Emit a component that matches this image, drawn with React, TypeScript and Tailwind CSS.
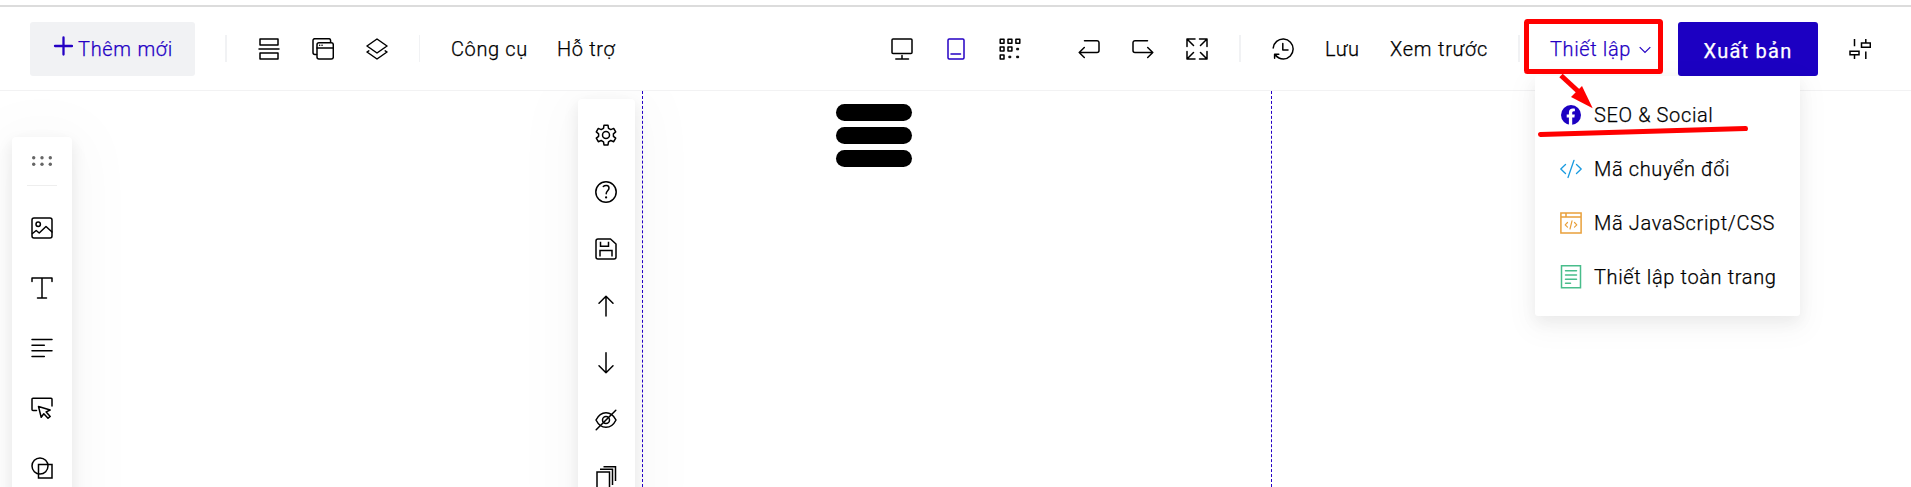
import type { ReactNode } from 'react'

function Icon({ children, className = '' }: { children: ReactNode; className?: string }) {
  return (
    <svg
      viewBox="0 0 22 22"
      className={`h-[22px] w-[22px] shrink-0 ${className}`}
      fill="none"
      stroke="currentColor"
      strokeWidth="1.5"
      strokeLinecap="round"
      strokeLinejoin="round"
    >
      {children}
    </svg>
  )
}

function Divider({ className = 'w-[2px]' }: { className?: string }) {
  return <div className={`h-[27px] shrink-0 bg-[#f1f2f4] ${className}`} />
}

const Sections = () => (
  <Icon>
    <rect x="2" y="1" width="18" height="6" />
    <path d="M1 11h20" />
    <rect x="2" y="15" width="18" height="6" />
  </Icon>
)
const Windows = () => (
  <Icon>
    <path d="M4.500 16.500H3a2 2 0 0 1-2-2V2.500a1.800 1.800 0 0 1 1.800-1.800h14a1.800 1.800 0 0 1 1.800 1.800V4" />
    <rect x="5" y="4.700" width="16.300" height="16.300" rx="2" />
    <path d="M5 10h16.300" />
    <path d="M7.600 7.300h.1M10 7.300h.1" />
  </Icon>
)
const Layers = () => (
  <Icon>
    <path d="M11 1 21 8l-10 7L1 8z" />
    <path d="M2.800 12.800 1 14l10 7 10-7-1.800-1.200" />
  </Icon>
)
const Desktop = () => (
  <Icon>
    <rect x="1" y="1" width="20" height="14.500" rx="1" />
    <path d="M11 17.500v3.200M4.800 21h12.700" />
  </Icon>
)
const Tablet = () => (
  <Icon className="text-[#2400c4]">
    <rect x="3" y="1" width="16" height="20" rx="1.200" />
    <path d="M6 16h9.500" />
  </Icon>
)
const Qr = () => (
  <Icon>
    <path d="M1.200 1.200h3.800v4H1.200zM9 1.200h3.900v4H9zM16.900 1.200h3.900v4h-3.900zM1.200 9h3.800v4H1.200zM9 9h3.900v4H9zM1.200 17h3.800v4H1.200z" />
    <path d="M18 10.300h1.600v1.500H18zM10.200 18.200h1.600v1.500h-1.600zM18 18.200h1.600v1.500H18z" strokeWidth="1" fill="currentColor" />
  </Icon>
)
const Undo = () => (
  <Icon>
    <path d="M6.500 2.700H19a2 2 0 0 1 2 2v7.800a2 2 0 0 1-2 2H1.200M6.300 9.500l-5.100 5 5.100 5" />
  </Icon>
)
const Redo = () => (
  <Icon>
    <path d="M15.500 2.700H3a2 2 0 0 0-2 2v7.800a2 2 0 0 0 2 2h17.800M15.700 9.500l5.100 5-5.100 5" />
  </Icon>
)
const Expand = () => (
  <Icon>
    <path d="M1 8.500V1h8M1 1l6.500 6.500M13.500 1H21v7.500M21 1l-6.500 6.500M1 13.500V21h8M1 21l6.500-6.500M21 13.500V21h-7.500M21 21l-6.500-6.500" />
  </Icon>
)
const History = () => (
  <Icon>
    <path d="M1.200 10A10 10 0 1 1 11.500 21c-3.500 0-6-1.300-8-4M10.800 5.500V12H16M2.600 20.300V16.300h4.200" />
  </Icon>
)
const Sliders = () => (
  <Icon>
    <path d="M5.500 1v7.300M1 13.200h9v3.600H1zM5.500 17v4M16.800 1v3.800M12.500 5h8.800v4.300h-8.800zM16.800 13.400V21" strokeLinecap="butt" strokeLinejoin="miter" />
  </Icon>
)
const Picture = () => (
  <Icon>
    <rect x="1" y="1" width="20" height="20" rx="2" />
    <circle cx="7.200" cy="7.300" r="2.200" />
    <path d="m1.500 16.500 3.700-3 3 2.500L15 9.500l6 5.500" />
  </Icon>
)
const TextIcon = () => (
  <Icon>
    <path d="M1 4.500V1h20v3.500M11 1v20M6.500 21h9" />
  </Icon>
)
const Paragraph = () => (
  <Icon>
    <path d="M1 2.500h20M1 8.200h12.300M1 13.800h20M1 19.500h12.300" />
  </Icon>
)
const Click = () => (
  <Icon>
    <path d="M5.500 13.500H2a1 1 0 0 1-1-1V2.200a1 1 0 0 1 1-1h18a1 1 0 0 1 1 1V9" />
    <path d="m7.500 9.500 2.700 10.800 2.600-3.500 4.200 4.500 2.200-1.900-4-4.500 4-1.900z" />
  </Icon>
)
const Shapes = () => (
  <Icon>
    <circle cx="9" cy="9" r="8" />
    <path d="M7.500 7.500H21v13.500H7.500z" strokeLinejoin="miter" />
  </Icon>
)
const Gear = () => (
  <Icon>
    <circle cx="11" cy="11" r="3.500" />
    <path d="M9 1.200h4l.5 3.100 2.300 1.300 2.900-1.200 2 3.500-2.300 1.900v2.500l2.300 1.900-2 3.500-2.900-1.200-2.300 1.300-.5 3.100H9l-.5-3.100-2.300-1.300-2.900 1.200-2-3.500 2.300-1.900V9.800L1.300 7.900l2-3.500 2.900 1.200 2.300-1.300z" />
  </Icon>
)
const Help = () => (
  <Icon>
    <circle cx="11" cy="11" r="10.200" />
    <path d="M8.300 5.500C9.700 4 14 3.700 14 7c0 2.800-2.800 2.800-2.800 5.800" />
    <path d="M11.100 16.300v.2" strokeWidth="2.200" />
  </Icon>
)
const Save = () => (
  <Icon>
    <path d="M3 1h12.500L21 6v13a2 2 0 0 1-2 2H3a2 2 0 0 1-2-2V3a2 2 0 0 1 2-2z" />
    <path d="M5.500 3.700v4.500h8V3.700M5 18.500v-6h12v6" strokeLinecap="butt" strokeLinejoin="miter" />
  </Icon>
)
const Up = () => (
  <Icon>
    <path d="M11 1.200V21M4 8.200l7-7 7 7" />
  </Icon>
)
const Down = () => (
  <Icon>
    <path d="M11 .8v20M4 13.800l7 7 7-7" />
  </Icon>
)
const Hidden = () => (
  <Icon>
    <path d="M1 11c2.500-5 6-7.300 10-7.300S18.500 6 21 11c-2.500 5-6 7.300-10 7.300S3.500 16 1 11z" />
    <circle cx="11" cy="11" r="3.500" />
    <path d="M20.800 1.200 1.200 20.800" />
  </Icon>
)
const Copies = () => (
  <Icon>
    <path d="M2 6h12.500v16H2zM5 3.300h12.500V19M8.500.7h12V15" strokeLinecap="butt" strokeLinejoin="miter" />
  </Icon>
)

const menu = [
  {
    label: 'SEO & Social',
    icon: (
      <svg viewBox="0 0 22 22" className="h-[22px] w-[22px]">
        <circle cx="11" cy="11" r="10" fill="#1c00c2" />
        <path d="M8.900 21v-7.400H6.700v-3h2.200V8.700c0-2.700 1.600-4.100 4-4.100.9 0 2 .2 2 .2v2.400h-1.100c-1.200 0-1.600.8-1.600 1.600v1.800h2.600l-.4 3h-2.200V21z" fill="#fff" />
      </svg>
    ),
  },
  {
    label: 'Mã chuyển đổi',
    icon: (
      <Icon className="text-[#1a9be0]">
        <path d="M5.500 6.500.8 11l4.700 4.500M16.500 6.500 21.200 11l-4.700 4.500M14 2.300 8 19.500" strokeWidth="1.300" />
      </Icon>
    ),
  },
  {
    label: 'Mã JavaScript/CSS',
    icon: (
      <Icon className="text-[#e9a03b]">
        <path d="M.9.900h20.200v20.200H.9zM1 4.900h20M6 1v4" strokeLinejoin="miter" />
        <path d="m7.500 10.500-2.300 2.300 2.300 2.300M14.500 10.500l2.300 2.300-2.300 2.300M12 8.800 10 17" strokeWidth="1.200" />
      </Icon>
    ),
  },
  {
    label: 'Thiết lập toàn trang',
    icon: (
      <Icon className="overflow-visible text-[#48bd8b]">
        <path d="M1.500-.2h19v21.900h-19z" strokeLinejoin="miter" />
        <path d="M5.500 4.800h11M5.500 9h11M5.500 13.200h11M5.500 17.200h5" />
      </Icon>
    ),
  },
]

const blockTools = [Gear, Help, Save, Up, Down, Hidden, Copies]
const insertTools = [Picture, TextIcon, Paragraph, Click, Shapes]

function Header() {
  return (
    <header className="flex h-[86px] w-full items-center border-t-2 border-b border-t-[#dcdcdc] border-b-[#f2f2f3] bg-white pl-[30px]">
      <button className="mt-px flex h-[54px] w-[165px] shrink-0 items-center rounded-[3px] bg-[#f1f2f4] pl-[23px] text-[#2400c4]">
        <svg viewBox="0 0 20 20" className="-mt-1.5 h-5 w-5 shrink-0" stroke="currentColor" strokeWidth="2.300" strokeLinecap="round">
          <path d="M10.500 1.500v17M2 10h17" />
        </svg>
        <span className="ml-[5px] tracking-[0.700px]">Thêm mới</span>
      </button>
      <Divider className="ml-[30px] w-[2px]" />
      <div className="ml-[31px] flex shrink-0 gap-8">
        <Sections />
        <Windows />
        <Layers />
      </div>
      <Divider className="ml-[31px] w-px" />
      <nav className="ml-[31px] flex w-[440px] shrink-0">
        <span className="w-[106px]">Công cụ</span>
        <span>Hỗ trợ</span>
      </nav>
      <div className="flex shrink-0 gap-8">
        <Desktop />
        <Tablet />
        <Qr />
      </div>
      <div className="ml-[57px] flex shrink-0 gap-8">
        <Undo />
        <Redo />
        <Expand />
      </div>
      <Divider className="ml-[31px] w-[2px]" />
      <div className="ml-[31px] flex shrink-0 items-center">
        <History />
        <span className="ml-[31px] w-[65px]">Lưu</span>
        <span className="w-[128px] tracking-[0.750px]">Xem trước</span>
      </div>
      <Divider />
      <div className="ml-[30px] flex w-[128px] shrink-0 items-center text-[#2400c4]">
        <span className="w-[89px]">Thiết lập</span>
        <svg viewBox="0 0 12 8" className="mt-0.5 h-2 w-3" fill="none" stroke="currentColor" strokeWidth="1.200">
          <path d="m.7 1.200 5.300 5.300 5.300-5.300" />
        </svg>
      </div>
      <button className="mt-px flex h-[54px] w-[140px] shrink-0 items-center justify-center rounded-[3px] bg-[#1c00c2] pt-[3px] font-normal tracking-[1.250px] text-white">
        Xuất bản
      </button>
      <div className="ml-[31px]">
        <Sliders />
      </div>
    </header>
  )
}

export default function App() {
  return (
    <div className="relative flex h-[487px] w-full flex-col overflow-hidden bg-white pt-[5px] font-['Roboto','Noto_Sans',sans-serif] text-[20px] leading-6 font-light tracking-[0.630px] whitespace-nowrap text-black [-webkit-text-stroke:0.250px_currentColor]">
      <div className="relative z-10">
        <Header />
      </div>

      <main className="flex h-[396px] items-start">
        <aside className="mt-[46px] ml-3 flex h-[420px] w-[60px] shrink-0 flex-col items-center rounded bg-white shadow-[0_6px_16px_rgba(0,0,0,0.09),0_9px_60px_20px_rgba(0,0,0,0.022)]">
          <svg viewBox="0 0 22 12" className="mt-[18px] h-3 w-[22px] shrink-0" fill="#666">
            {[2.7, 11, 19.3].map((x) => (
              <g key={x}>
                <circle cx={x} cy="2.700" r="1.700" />
                <circle cx={x} cy="9.300" r="1.700" />
              </g>
            ))}
          </svg>
          <div className="mt-[18px] h-px w-[30px] shrink-0 bg-[#eeeeee]" />
          <div className="mt-[31px] flex flex-col gap-[38px]">
            {insertTools.map((Tool, i) => (
              <Tool key={i} />
            ))}
          </div>
        </aside>

        <aside className="mt-[8px] ml-[506px] flex h-[420px] w-[57px] shrink-0 flex-col items-center gap-[35px] rounded bg-white pt-[25px] pr-px shadow-[0_6px_16px_rgba(0,0,0,0.09),0_9px_60px_20px_rgba(0,0,0,0.022)]">
          {blockTools.map((Tool, i) => (
            <Tool key={i} />
          ))}
        </aside>

        <section className="ml-[7px] flex h-full w-[630px] shrink-0 flex-col gap-[6px] border-x border-dashed border-[#2400c4] pt-[13px] pl-[193px]">
          <div className="h-[17px] w-[76px] rounded-full bg-black" />
          <div className="h-[17px] w-[76px] rounded-full bg-black" />
          <div className="h-[17px] w-[76px] rounded-full bg-black" />
        </section>
      </main>

      <div className="absolute top-[76px] left-[1535px] z-20 flex h-[240px] w-[265px] flex-col rounded-[3px] bg-white pt-[12px] shadow-[0_6px_16px_rgba(0,0,0,0.06),0_9px_28px_8px_rgba(0,0,0,0.03)]">
        {menu.map((item) => (
          <div key={item.label} className="flex h-[54px] items-center pl-[25px] text-black">
            {item.icon}
            <span className="ml-[12px]">{item.label}</span>
          </div>
        ))}
      </div>

      <svg viewBox="0 0 230 125" className="pointer-events-none absolute top-[15px] left-[1520px] z-30 h-[125px] w-[230px]" fill="none" stroke="#ff0000">
        <rect x="6.500" y="6.500" width="134" height="50" rx="1" strokeWidth="5" />
        <path d="M41 60.500 60 78" strokeWidth="5" />
        <path d="M72.700 93.300 51 82 62 71z" fill="#ff0000" stroke="none" />
        <path d="M20.500 119.500 225.500 113.500" strokeWidth="5" strokeLinecap="round" />
      </svg>
    </div>
  )
}
